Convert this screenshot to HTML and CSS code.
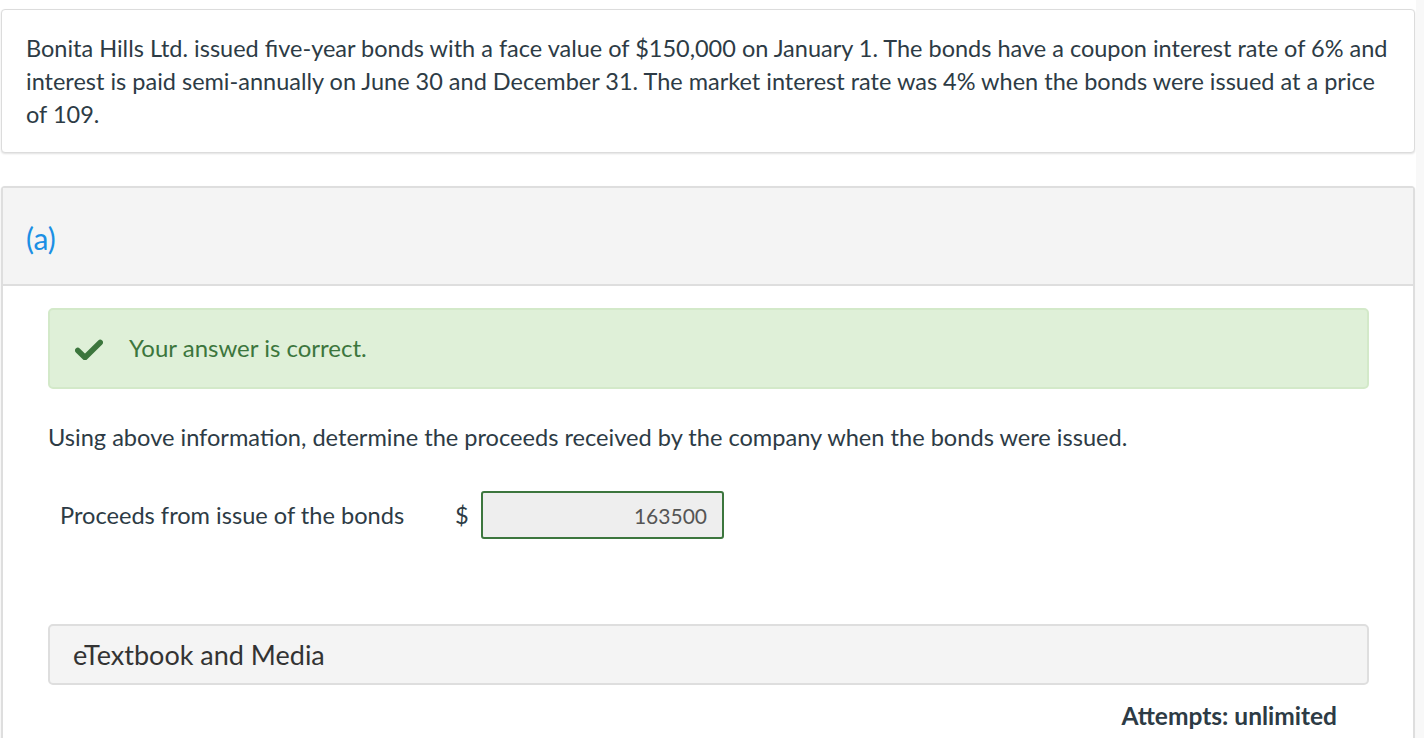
FILE: index.html
```html
<!DOCTYPE html>
<html>
<head>
<meta charset="utf-8">
<link rel="stylesheet" href="styles.css">
</head>
<body>
<div class="page">
  <div class="card intro">
    <p>Bonita Hills Ltd. issued five-year bonds with a face value of $150,000 on January 1. The bonds have a coupon interest rate of 6% and interest is paid semi-annually on June 30 and December 31. The market interest rate was 4% when the bonds were issued at a price of 109.</p>
  </div>
  <div class="card part">
    <div class="part-head"><span class="part-label">(a)</span></div>
    <div class="part-body">
      <div class="alert">
        <svg class="check" viewBox="0 0 28 21" width="28" height="21"><path d="M2.8 11.5 L10 18.5 L25.2 3.5" fill="none" stroke="#3c763d" stroke-width="5.6" stroke-linecap="round" stroke-linejoin="round"/></svg>
        <span class="alert-text">Your answer is correct.</span>
      </div>
      <p class="question">Using above information, determine the proceeds received by the company when the bonds were issued.</p>
      <div class="answer-row">
        <span class="answer-label">Proceeds from issue of the bonds</span>
        <span class="dollar">$</span>
        <div class="answer-input">163500</div>
      </div>
      <div class="media">eTextbook and Media</div>
      <div class="attempts">Attempts: unlimited</div>
    </div>
  </div>
</div>
</body>
</html>
```

FILE: styles.css
```css
html, body {
  margin: 0;
  padding: 0;
}
body {
  background: #f8f8f8;
  font-family: Lato, "Open Sans", sans-serif;
  color: #2d3b45;
}
.page {
  width: 1416px;
  height: 738px;
  overflow: hidden;
  background: #fff;
  padding: 9px 0 0 1px;
  box-sizing: border-box;
}
.card {
  width: 1414px;
  box-sizing: border-box;
  border: 1px solid #dcdcdc;
  border-radius: 4px;
  box-shadow: 0 1px 2px rgba(0,0,0,0.12);
  background: #fff;
}
.intro {
  padding: 22px 16px 21px 24px;
}
.intro p {
  margin: 0;
  font-size: 23.5px;
  line-height: 33px;
}
.part {
  margin-top: 33px;
  border-width: 2px;
  border-color: #dedede;
  height: 600px;
}
.part-head {
  height: 98px;
  background: #f4f4f4;
  border-bottom: 2px solid #dedede;
  display: flex;
  align-items: center;
  padding-left: 23px;
  box-sizing: border-box;
}
.part-label {
  color: #1b8fe4;
  font-size: 30px;
  margin-top: 4px;
}
.part-body {
  padding: 22px 44px 0 45px;
}
.alert {
  height: 81px;
  box-sizing: border-box;
  background: #dff0d8;
  border: 2px solid #d3e9c9;
  border-radius: 5px;
  display: flex;
  align-items: center;
  padding-left: 25px;
  color: #3c763d;
  font-size: 24px;
}
.check {
  margin-right: 26px;
  margin-top: 1px;
}
.alert-text {
  margin-bottom: 3px;
}
.question {
  margin: 32px 0 0 0;
  font-size: 23.6px;
  line-height: 33px;
}
.answer-row {
  display: flex;
  align-items: center;
  margin-top: 37px;
  padding-left: 12px;
  font-size: 23.6px;
}
.answer-label {
  width: 395px;
}
.dollar {
  width: 26px;
}
.answer-input {
  width: 243px;
  height: 48px;
  box-sizing: border-box;
  border: 2px solid #3c763d;
  border-radius: 3px;
  background: #eeeeee;
  color: #555;
  font-size: 21px;
  display: flex;
  align-items: center;
  justify-content: flex-end;
  padding-right: 15px;
}
.media {
  margin-top: 85px;
  height: 61px;
  box-sizing: border-box;
  background: #f4f4f4;
  border: 2px solid #dedede;
  border-radius: 5px;
  display: flex;
  align-items: center;
  padding-left: 23px;
  font-size: 27px;
  color: #333;
}
.attempts {
  text-align: right;
  padding-right: 32px;
  margin-top: 16px;
  font-weight: 700;
  font-size: 24.5px;
  line-height: 30px;
}
```
